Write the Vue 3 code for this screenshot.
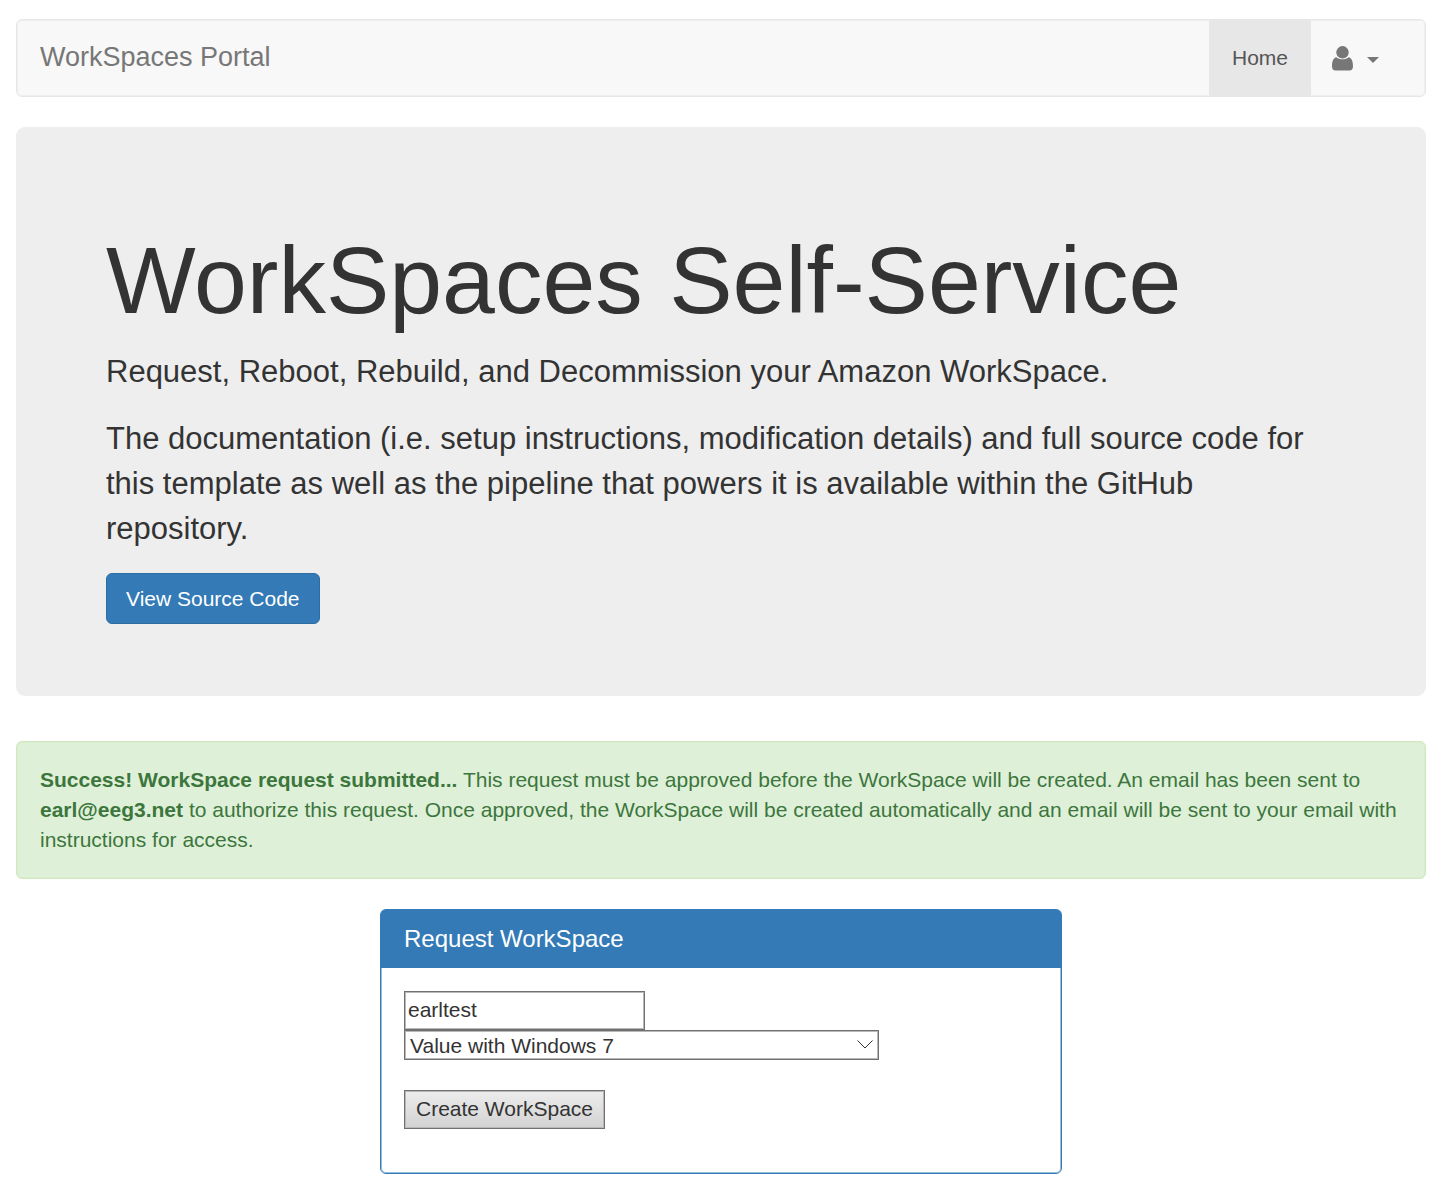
<script setup>
import { ref } from 'vue'

const username = ref('earltest')
const bundle = ref('Value with Windows 7')
const bundles = ['Value with Windows 7']
const approver = 'earl@eeg3.net'
</script>

<template>
  <div class="container">
    <nav class="navbar">
      <a class="brand" href="#">WorkSpaces Portal</a>
      <div class="nav-links">
        <a class="nav-link active" href="#">Home</a>
        <button class="nav-link" type="button" aria-label="Account">
          <svg class="user" viewBox="0 0 21 25" aria-hidden="true">
            <path d="M4.4 11.2C1.5 11.8 0 15 0 20.2C0 23 1.2 24.5 3.6 24.5H17.4C19.8 24.5 21 23 21 20.2C21 15 19.5 11.8 16.6 11.2C15 12.6 13 13.3 10.5 13.3C8 13.3 6 12.6 4.4 11.2Z" />
            <circle cx="10.5" cy="6.3" r="6.2" />
          </svg>
          <span class="caret"></span>
        </button>
      </div>
    </nav>

    <header class="jumbotron">
      <h1>WorkSpaces Self-Service</h1>
      <p>Request, Reboot, Rebuild, and Decommission your Amazon WorkSpace.</p>
      <p>
        The documentation (i.e. setup instructions, modification details) and full source code for
        this template as well as the pipeline that powers it is available within the GitHub
        repository.
      </p>
      <a class="source" href="#">View Source Code</a>
    </header>

    <div class="alert" role="alert">
      <strong>Success! WorkSpace request submitted...</strong> This request must be approved before
      the WorkSpace will be created. An email has been sent to <strong>{{ approver }}</strong> to
      authorize this request. Once approved, the WorkSpace will be created automatically and an
      email will be sent to your email with instructions for access.
    </div>

    <section class="panel">
      <h2>Request WorkSpace</h2>
      <form @submit.prevent>
        <input v-model="username" class="field" type="text" aria-label="Username" />
        <div class="select">
          <select v-model="bundle" class="field" aria-label="WorkSpace bundle">
            <option v-for="name in bundles" :key="name">{{ name }}</option>
          </select>
          <svg class="chevron" viewBox="0 0 16 9" aria-hidden="true">
            <path d="M0.5 0.5L8 8L15.5 0.5" />
          </svg>
        </div>
        <button class="field" type="submit">Create WorkSpace</button>
      </form>
    </section>
  </div>
</template>

<style>
body {
  margin: 0;
  background: #fff;
}
</style>

<style scoped>
.container,
.container * {
  box-sizing: border-box;
}

.container {
  padding: 19px 19px 25px 16px;
  font: 21px/30px "Liberation Sans", Arial, sans-serif;
  color: #333;
}

.navbar {
  display: flex;
  justify-content: space-between;
  height: 78px;
  margin-bottom: 30px;
  padding-right: 23px;
  border: 1px solid #e7e7e7;
  border-radius: 6px;
  background: #f8f8f8;
  box-shadow: inset 0 0 0 1px #efefef;
}

.brand {
  display: flex;
  align-items: center;
  padding: 0 23px 2px;
  font-size: 27px;
  color: #777;
  text-decoration: none;
}

.nav-links {
  display: flex;
}

.nav-link {
  display: flex;
  align-items: center;
  gap: 14px;
  padding: 0 23px 0 21px;
  border: 0;
  background: none;
  color: #777;
  font: inherit;
  text-decoration: none;
}

.nav-link.active {
  padding: 0 23px;
  background: #e7e7e7;
  color: #555;
}

.user {
  width: 21px;
  height: 25px;
  fill: currentColor;
}

.caret {
  margin-top: 3px;
  border-top: 6px solid;
  border-right: 6px solid transparent;
  border-left: 6px solid transparent;
}

.jumbotron {
  margin-bottom: 45px;
  padding: 101px 90px 72px;
  border-radius: 9px;
  background: #eee;
}

h1 {
  margin: 0 0 17px;
  font-size: 95px;
  font-weight: 400;
  line-height: 104px;
}

.jumbotron p {
  margin: 0 0 22px;
  font-size: 31px;
  line-height: 45px;
}

.source {
  display: block;
  width: fit-content;
  padding: 9px 19px;
  border: 1px solid #2e6da4;
  border-radius: 6px;
  background: #337ab7;
  color: #fff;
  line-height: 31px;
  text-decoration: none;
}

.alert {
  margin-bottom: 30px;
  padding: 23px;
  border: 1px solid #d0e9c0;
  border-radius: 6px;
  background: #dff0d8;
  box-shadow: inset 0 0 0 1px #d9edce;
  color: #3c763d;
}

.panel {
  width: calc(50% - 23px);
  margin: 0 auto;
  border: 1px solid #337ab7;
  border-radius: 6px;
  box-shadow: inset 0 0 0 1px #9abddb;
}

h2 {
  margin: 0;
  padding: 14px 23px;
  border-radius: 4px 4px 0 0;
  background: #337ab7;
  color: #fff;
  font-size: 24px;
  font-weight: 400;
  line-height: 30px;
}

form {
  display: flex;
  flex-direction: column;
  align-items: flex-start;
  padding: 23px 23px 44px;
}

.field {
  height: 39px;
  margin: 0;
  border: 1px solid #707070;
  border-radius: 0;
  background: #fff;
  box-shadow: inset 0 0 0 1px #b8b8b8;
  color: #333;
  font: inherit;
}

input.field {
  width: 241px;
  padding: 0 3px 2px;
}

.select {
  position: relative;
  width: 475px;
  max-width: 100%;
  margin-bottom: 30px;
}

select.field {
  display: block;
  width: 100%;
  height: 30px;
  padding: 0 30px 2px 5px;
  appearance: none;
}

.chevron {
  position: absolute;
  top: 10px;
  right: 6px;
  width: 16px;
  height: 9px;
  fill: none;
  stroke: #333;
  pointer-events: none;
}

button.field {
  padding: 0 11px 2px;
  background: linear-gradient(#ededed, #d2d2d2);
}
</style>
